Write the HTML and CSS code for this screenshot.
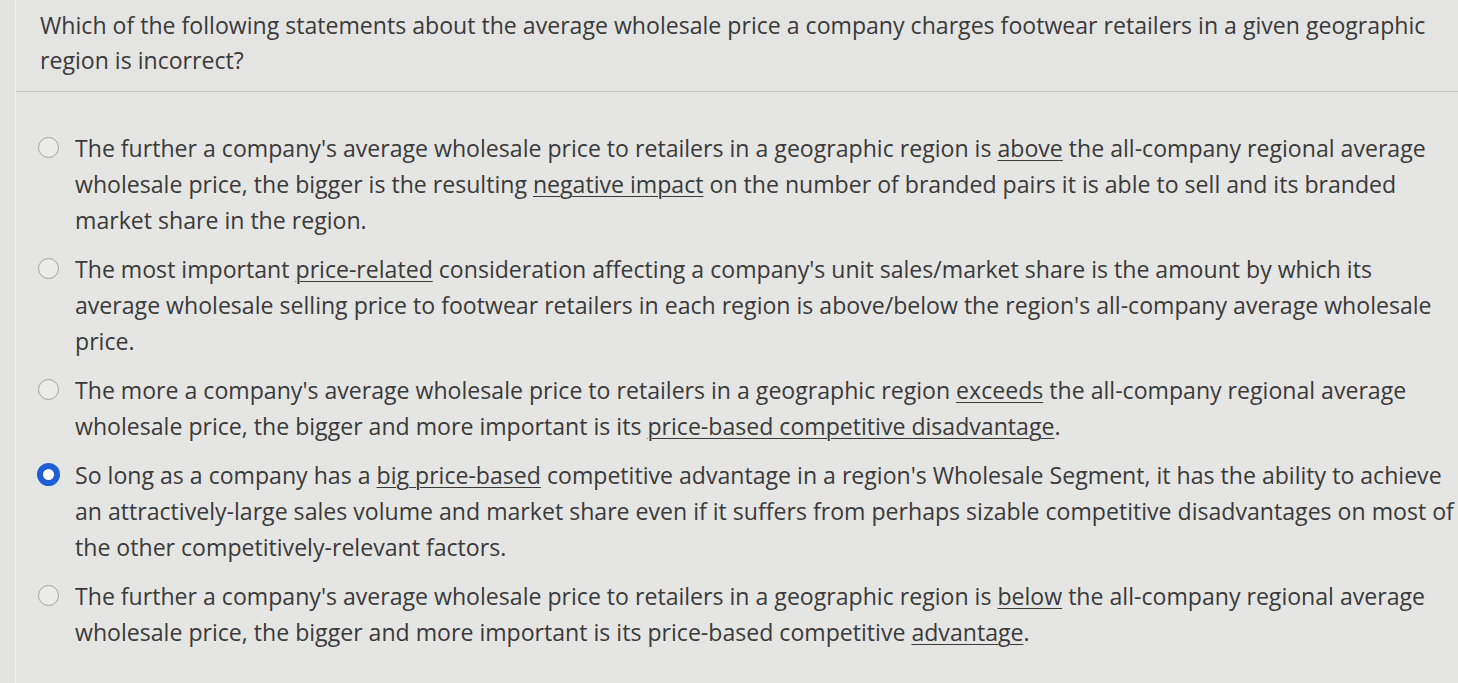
FILE: index.html
```html
<!DOCTYPE html>
<html lang="en">
<head>
<meta charset="utf-8">
<title>Question</title>
<link rel="stylesheet" href="styles.css">
</head>
<body>
<div class="panel">
  <div class="question">Which of the following statements about the average wholesale price a company charges footwear retailers in a given geographic<br>region is incorrect?</div>
  <div class="options">
    <label class="option">
      <span class="radio"></span>
      <span class="text">The further a company's average wholesale price to retailers in a geographic region is <u>above</u> the all-company regional average<br>wholesale price, the bigger is the resulting <u>negative impact</u> on the number of branded pairs it is able to sell and its branded<br>market share in the region.</span>
    </label>
    <label class="option">
      <span class="radio"></span>
      <span class="text">The most important <u>price-related</u> consideration affecting a company's unit sales/market share is the amount by which its<br>average wholesale selling price to footwear retailers in each region is above/below the region's all-company average wholesale<br>price.</span>
    </label>
    <label class="option">
      <span class="radio"></span>
      <span class="text">The more a company's average wholesale price to retailers in a geographic region <u>exceeds</u> the all-company regional average<br>wholesale price, the bigger and more important is its <u>price-based competitive disadvantage</u>.</span>
    </label>
    <label class="option selected">
      <span class="radio"></span>
      <span class="text">So long as a company has a <u>big price-based</u> competitive advantage in a region's Wholesale Segment, it has the ability to achieve<br>an attractively-large sales volume and market share even if it suffers from perhaps sizable competitive disadvantages on most of<br>the other competitively-relevant factors.</span>
    </label>
    <label class="option">
      <span class="radio"></span>
      <span class="text">The further a company's average wholesale price to retailers in a geographic region is <u>below</u> the all-company regional average<br>wholesale price, the bigger and more important is its price-based competitive <u>advantage</u>.</span>
    </label>
  </div>
</div>
</body>
</html>
```

FILE: styles.css
```css
html, body {
  margin: 0;
  padding: 0;
  background: #e3e3e1;
}
body {
  font-family: "Open Sans", "Noto Sans", sans-serif;
  color: #3a3a3a;
  width: 1458px;
  height: 683px;
  overflow: hidden;
}
.panel {
  margin-left: 15px;
  border-left: 1px solid #f0f0ee;
  min-height: 683px;
  background: #e5e5e3;
}
.question {
  font-size: 23.1px;
  line-height: 35px;
  padding: 8px 0 13px 24px;
  white-space: nowrap;
  background: #e4e4e2;
  border-bottom: 1px solid #c9c9c7;
}
.options {
  padding: 38px 0 0 22px;
  display: flex;
  flex-direction: column;
  gap: 13px;
}
.option {
  display: flex;
  align-items: flex-start;
  gap: 16px;
  font-size: 23.1px;
  line-height: 36px;
}
.text {
  white-space: nowrap;
}
.radio {
  flex: none;
  width: 21px;
  height: 21px;
  margin-top: 7px;
  border-radius: 50%;
  border: 1.5px solid #a2a2a2;
  box-sizing: border-box;
  background: #ebebea;
}
.selected .radio {
  border: 6px solid #1f5fd6;
  background: #ffffff;
  width: 23px;
  height: 23px;
  margin-top: 6px;
  margin-left: -1px;
  margin-right: -1px;
}
.text u {
  text-decoration-thickness: 1px;
  text-underline-offset: 3px;
}
```
